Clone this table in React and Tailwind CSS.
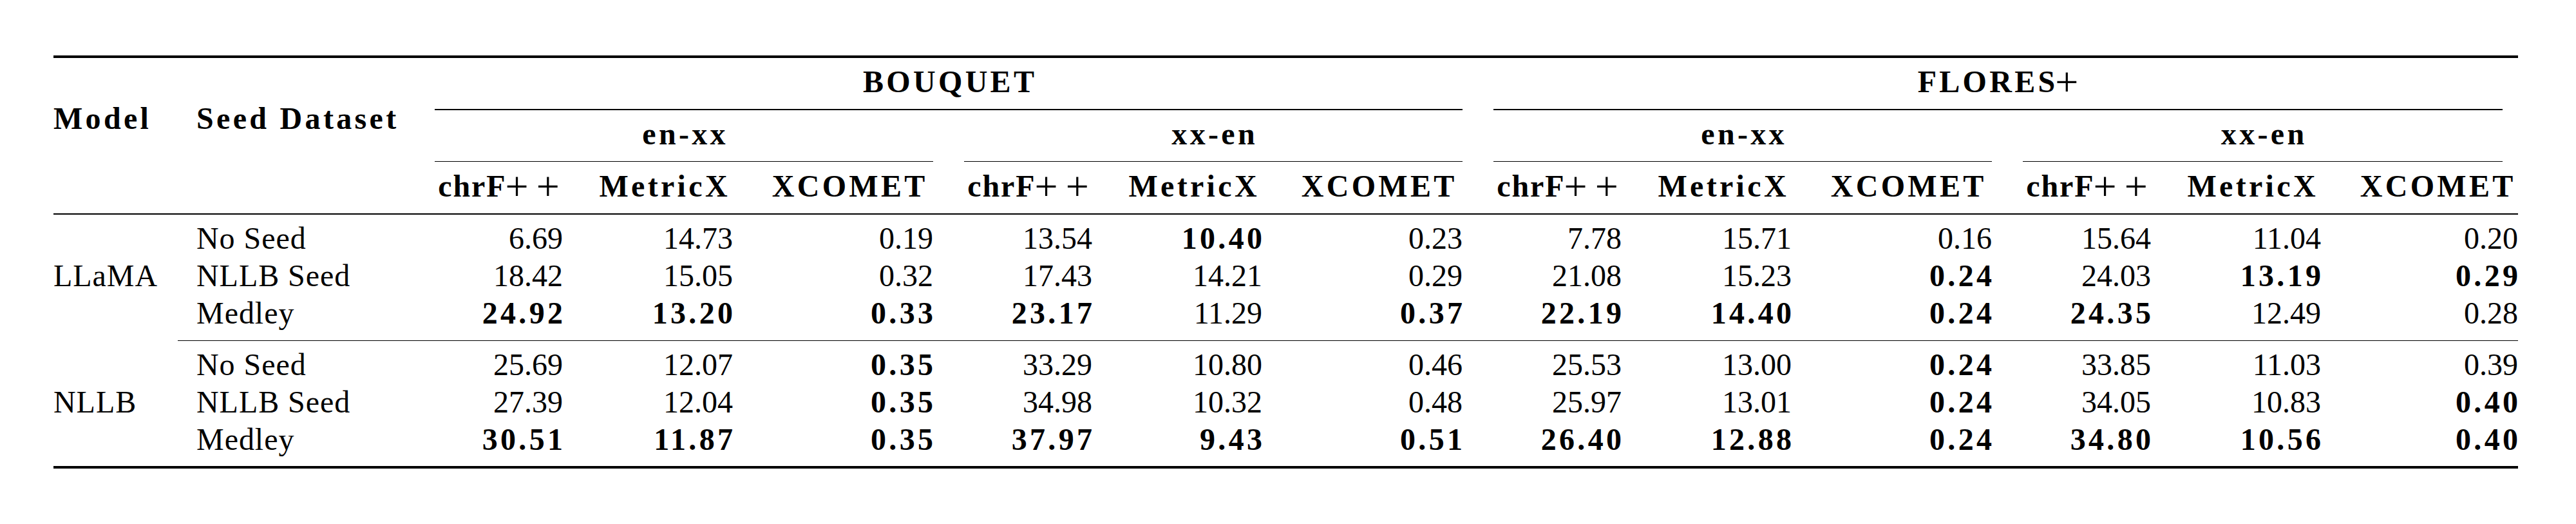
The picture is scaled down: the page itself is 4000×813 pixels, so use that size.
import React from 'react';

const W = [
  'w-[247px]', 'w-[264px]', 'w-[311px]',
  'w-[247px]', 'w-[264px]', 'w-[311px]',
  'w-[247px]', 'w-[264px]', 'w-[311px]',
  'w-[247px]', 'w-[264px]', 'w-[282px]',
];
const METRICS = ['chrF', 'MetricX', 'XCOMET'];

const groups = [
  {
    model: 'LLaMA',
    rows: [
      ['No Seed', '6.69 14.73 0.19 13.54 *10.40 0.23 7.78 15.71 0.16 15.64 11.04 0.20'],
      ['NLLB Seed', '18.42 15.05 0.32 17.43 14.21 0.29 21.08 15.23 *0.24 24.03 *13.19 *0.29'],
      ['Medley', '*24.92 *13.20 *0.33 *23.17 11.29 *0.37 *22.19 *14.40 *0.24 *24.35 12.49 0.28'],
    ],
  },
  {
    model: 'NLLB',
    rows: [
      ['No Seed', '25.69 12.07 *0.35 33.29 10.80 0.46 25.53 13.00 *0.24 33.85 11.03 0.39'],
      ['NLLB Seed', '27.39 12.04 *0.35 34.98 10.32 0.48 25.97 13.01 *0.24 34.05 10.83 *0.40'],
      ['Medley', '*30.51 *11.87 *0.35 *37.97 *9.43 *0.51 *26.40 *12.88 *0.24 *34.80 *10.56 *0.40'],
    ],
  },
];

const B = ({ children }) => (
  <span className="font-bold tracking-[0.09em] mr-[-0.09em]">{children}</span>
);

// math-mode plus, thin and wider than the text one
const Plus = ({ gap }) => (
  <span className={`${gap ? 'ml-[12px]' : ''} font-normal text-[64px] leading-[0px] align-[-6px]`}>+</span>
);

const MetricHead = ({ name }) =>
  name === 'chrF' ? (
    <>
      <span className="font-bold tracking-[0.04em] mr-[-0.04em]">chrF</span>
      <Plus />
      <Plus gap />
    </>
  ) : (
    <B>{name}</B>
  );

const Cell = ({ i, value }) => {
  const bold = value.startsWith('*');
  const v = bold ? value.slice(1) : value;
  return (
    <div className={`${W[i]} ${i === 11 ? 'pr-0' : 'pr-[24px]'} text-right`}>
      {bold ? <B>{v}</B> : v}
    </div>
  );
};

const Group = ({ group }) => (
  <div className="flex flex-col">
    {group.rows.map(([seed, nums], r) => (
      <div key={seed} className="flex h-[57.6px]">
        <div className="w-[193px] tracking-[0.02em]">{r === 1 ? group.model : ''}</div>
        <div className="w-[375px] pl-[29px] tracking-[0.02em]">{seed}</div>
        {nums.split(' ').map((n, i) => (
          <Cell key={i} i={i} value={n} />
        ))}
      </div>
    ))}
  </div>
);

export default function App() {
  return (
    <div className="w-[4000px] h-[813px] bg-white pt-[86px] pl-[83px] [font-family:Liberation_Serif,serif] text-black">
      <div className="w-[3827px] text-[48px] leading-[48px]">
        <div className="h-[4px] bg-black" />

        <div className="flex mt-[13.2px]">
          <div className="w-[193px] pt-[57.3px]">
            <B>Model</B>
          </div>
          <div className="w-[375px] pl-[29px] pt-[57.3px]">
            <B>Seed Dataset</B>
          </div>
          <div className="w-[3259px] flex flex-col">
            <div className="flex h-[57.6px]">
              <div className="w-[1644px] text-center">
                <B>BOUQUET</B>
              </div>
              <div className="w-[1615px] text-center">
                <B>FLORES</B>
                <Plus />
              </div>
            </div>
            <div className="flex mt-[8.3px] h-[1.5px]">
              <div className="ml-[24px] w-[1596px] bg-black" />
              <div className="ml-[48px] w-[1567px] bg-black" />
            </div>
            <div className="flex mt-[13.4px] h-[57.6px]">
              <div className="w-[822px] text-center"><B>en-xx</B></div>
              <div className="w-[822px] text-center"><B>xx-en</B></div>
              <div className="w-[822px] text-center"><B>en-xx</B></div>
              <div className="w-[793px] text-center"><B>xx-en</B></div>
            </div>
            <div className="flex mt-[8.3px] h-[1.5px]">
              <div className="ml-[24px] w-[774px] bg-black" />
              <div className="ml-[48px] w-[774px] bg-black" />
              <div className="ml-[48px] w-[774px] bg-black" />
              <div className="ml-[48px] w-[745px] bg-black" />
            </div>
            <div className="flex mt-[13.4px] h-[57.6px]">
              {W.map((w, i) => (
                <div key={i} className={`${w} pl-[29px] ${i === 11 ? 'pr-0' : 'pr-[29px]'} text-center whitespace-nowrap`}>
                  <MetricHead name={METRICS[i % 3]} />
                </div>
              ))}
            </div>
          </div>
        </div>

        <div className="mt-[8.3px] h-[2.4px] bg-black" />
        <div className="mt-[13.4px]">
          <Group group={groups[0]} />
        </div>
        <div className="ml-[193px] mt-[8.3px] h-[1.5px] bg-black" />
        <div className="mt-[13.4px]">
          <Group group={groups[1]} />
        </div>
        <div className="mt-[8.3px] h-[4px] bg-black" />
      </div>
    </div>
  );
}
